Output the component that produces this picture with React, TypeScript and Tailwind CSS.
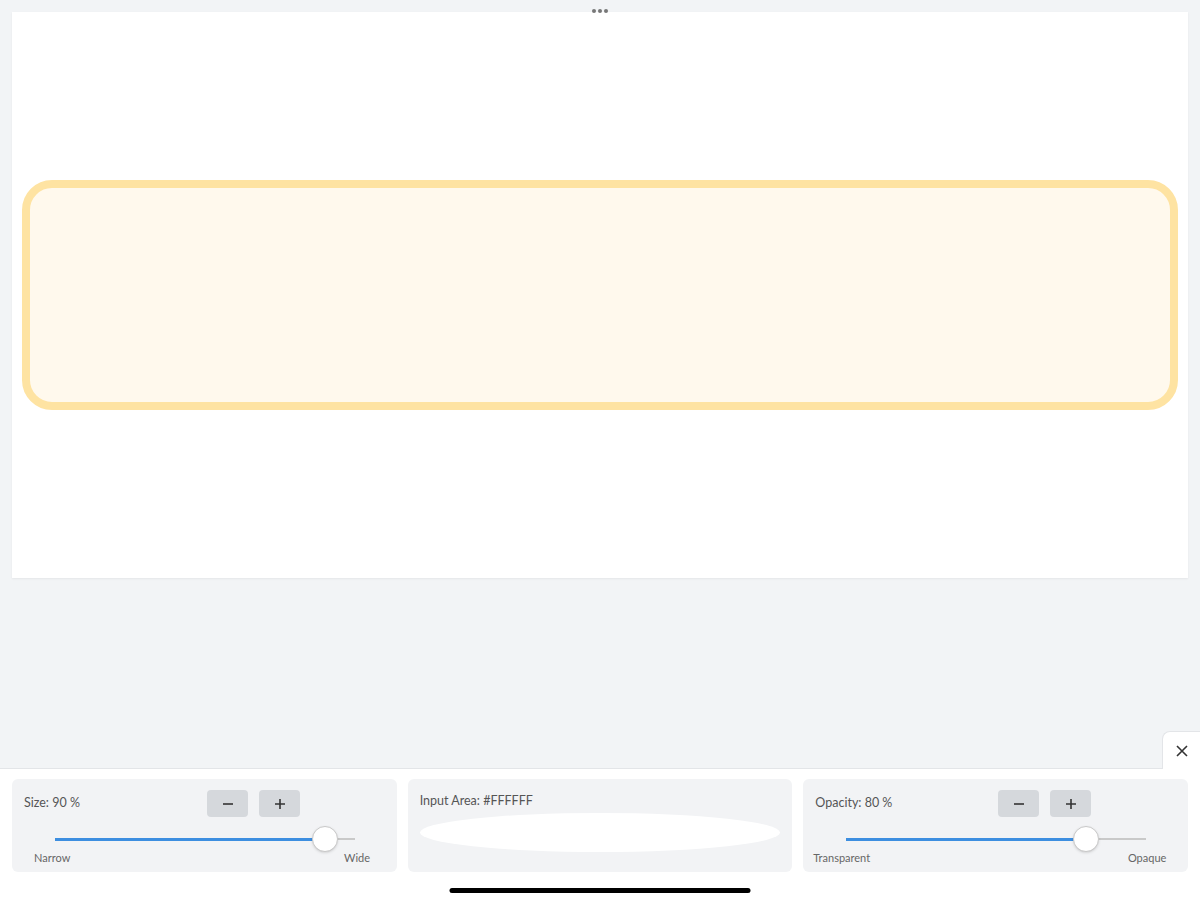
import React from 'react';

type SliderCardProps = {
  label: string;
  value: number;
  left: string;
  right: string;
  wide?: boolean;
};

const SliderCard: React.FC<SliderCardProps> = ({ label, value, left, right, wide }) => (
  <div className="h-[93px] rounded-md bg-[#f2f3f5] pl-3 pt-[11px]">
    <div className="flex h-[27px] items-center">
      <span className="w-[183px] text-[12.5px] text-[#555]">{label}</span>
      <div className="flex gap-[11px]">
        <button className="flex h-[27px] w-[41px] items-center justify-center rounded bg-[#d5d8dc] text-[#333]">
          <svg width="14" height="14" viewBox="0 0 14 14" fill="none" stroke="currentColor" strokeWidth="1.6">
            <path d="M2 7h10" />
          </svg>
        </button>
        <button className="flex h-[27px] w-[41px] items-center justify-center rounded bg-[#d5d8dc] text-[#333]">
          <svg width="14" height="14" viewBox="0 0 14 14" fill="none" stroke="currentColor" strokeWidth="1.6">
            <path d="M2 7h10M7 2v10" />
          </svg>
        </button>
      </div>
    </div>
    <div className="relative ml-[31px] mt-[9px] h-[26px] w-[300px]">
      <div className="absolute left-0 right-0 top-[12px] h-[2px] bg-[#c9c9c9]" />
      <div className="absolute left-0 top-[12px] h-[3px] bg-[#3d8ee0]" style={{ width: `${value}%` }} />
      <div
        className="absolute top-0 h-[26px] w-[26px] -translate-x-1/2 rounded-full border border-[#c8c8c8] bg-white shadow-sm"
        style={{ left: `${value}%` }}
      />
    </div>
    <div
      className={
        wide
          ? '-mt-[2px] -ml-[2px] flex w-[353px] justify-between text-[11px] text-[#666]'
          : '-mt-[2px] flex w-[346px] justify-between pl-[10px] text-[11px] text-[#666]'
      }
    >
      <span>{left}</span>
      <span>{right}</span>
    </div>
  </div>
);

const App: React.FC = () => {
  return (
    <div className="flex h-[900px] flex-col bg-[#f2f4f6]" style={{ fontFamily: 'Lato, "Open Sans", sans-serif' }}>
      <div className="relative mx-3 mt-3 flex h-[566px] items-center bg-white px-[10px] shadow-[0_1px_2px_rgba(0,0,0,0.06)]">
        <div className="absolute -top-[3px] left-1/2 flex -translate-x-1/2 gap-[2px]">
          <span className="h-[4px] w-[4px] rounded-full bg-[#777]" />
          <span className="h-[4px] w-[4px] rounded-full bg-[#777]" />
          <span className="h-[4px] w-[4px] rounded-full bg-[#777]" />
        </div>
        <div className="h-[230px] w-full rounded-[30px] border-[8px] border-[#fee3a2] bg-[#fff9ed]" />
      </div>

      <div className="flex-1" />

      <div className="relative h-[132px] border-t border-[#e3e5e8] bg-white">
        <button className="absolute -top-[38px] right-0 flex h-[38px] w-[38px] items-center justify-center rounded-tl-lg border border-b-0 border-r-0 border-[#e3e5e8] bg-white text-[#333]">
          <svg width="14" height="14" viewBox="0 0 14 14" fill="none" stroke="currentColor" strokeWidth="1.6">
            <path d="M2 2l10 10M12 2L2 12" />
          </svg>
        </button>

        <div className="grid grid-cols-3 gap-[11px] px-3 pt-[10px]">
          <SliderCard label="Size: 90 %" value={90} left="Narrow" right="Wide" />
          <div className="h-[93px] rounded-md bg-[#f2f3f5] px-3 pt-[8px]">
            <span className="text-[12.5px] text-[#555]">Input Area: #FFFFFF</span>
            <div className="mt-[2px] h-[39px] w-[360px] rounded-[50%] bg-white" />
          </div>
          <SliderCard label="Opacity: 80 %" value={80} left="Transparent" right="Opaque" wide />
        </div>

        <div className="absolute bottom-[7px] left-1/2 h-[5px] w-[301px] -translate-x-1/2 rounded-full bg-black" />
      </div>
    </div>
  );
};

export default App;
